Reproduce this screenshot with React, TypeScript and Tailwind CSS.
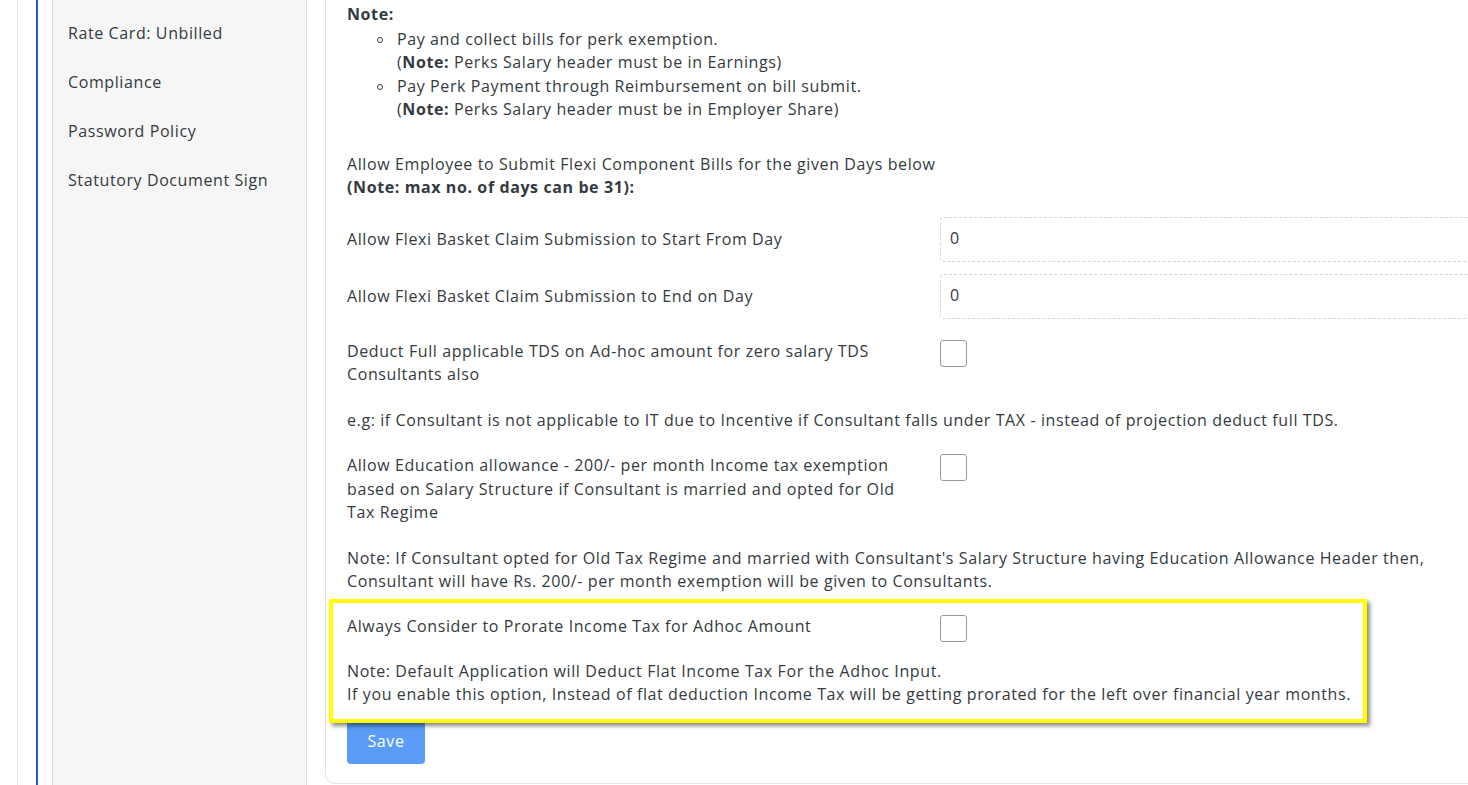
import React from 'react';

const sideItems = ['Rate Card: Unbilled', 'Compliance', 'Password Policy', 'Statutory Document Sign'];

const Check = () => (
  <div className="w-[27px] h-[27px] rounded-[3px] border border-[#9a9a9a] bg-white" />
);

const Row = ({ label, children, className = '' }: { label: React.ReactNode; children: React.ReactNode; className?: string }) => (
  <div className={`flex items-start ${className}`}>
    <div className="w-[593px] pr-[40px] shrink-0">{label}</div>
    <div className="flex-1">{children}</div>
  </div>
);

const App: React.FC = () => {
  return (
    <div
      className="w-[1468px] h-[785px] overflow-hidden bg-white flex text-[16px] leading-[23.5px] tracking-[0.6px] text-[#343a40]"
      style={{ fontFamily: '"Open Sans", "Liberation Sans", sans-serif' }}
    >
      {/* outer rails */}
      <div className="w-[17px] shrink-0" />
      <div className="w-[19px] shrink-0 border-l border-[#e6e6e6]" />
      <div className="w-[16px] shrink-0 border-l-2 border-[#1d5bd6]" />

      {/* sidebar */}
      <div className="w-[255px] shrink-0 bg-[#f6f6f6] border-x border-[#dcdcdc] pl-[15px] pt-[22px]">
        {sideItems.map((s) => (
          <div key={s} className="h-[49px]">{s}</div>
        ))}
      </div>

      <div className="w-[18px] shrink-0" />

      {/* content card */}
      <div className="relative w-[1300px] shrink-0 border-l border-b border-[#e3e3e3] rounded-bl-[10px] h-[784px] pl-[21px] pt-[3px]">
        <div className="font-bold">Note:</div>
        <ul className="pl-[50px] pt-[1px]">
          <li className="relative">
            <span className="absolute -left-[20px] top-[9px] w-[6px] h-[6px] rounded-full border border-[#343a40]" />
            Pay and collect bills for perk exemption.
            <br />(<b>Note:</b> Perks Salary header must be in Earnings)
          </li>
          <li className="relative">
            <span className="absolute -left-[20px] top-[9px] w-[6px] h-[6px] rounded-full border border-[#343a40]" />
            Pay Perk Payment through Reimbursement on bill submit.
            <br />(<b>Note:</b> Perks Salary header must be in Employer Share)
          </li>
        </ul>

        <div className="mt-[31px]">Allow Employee to Submit Flexi Component Bills for the given Days below</div>
        <div className="font-bold">(Note: max no. of days can be 31):</div>

        <Row className="mt-[17px]" label={<div className="pt-[11px]">Allow Flexi Basket Claim Submission to Start From Day</div>}>
          <div className="h-[45px] w-[640px] border border-dashed border-[#d6d6d6] rounded-[4px] flex items-center pl-[9px]">0</div>
        </Row>
        <Row className="mt-[12px]" label={<div className="pt-[11px]">Allow Flexi Basket Claim Submission to End on Day</div>}>
          <div className="h-[45px] w-[640px] border border-dashed border-[#d6d6d6] rounded-[4px] flex items-center pl-[9px]">0</div>
        </Row>

        <Row className="mt-[21px]" label="Deduct Full applicable TDS on Ad-hoc amount for zero salary TDS Consultants also">
          <Check />
        </Row>
        <div className="mt-[22px]">
          e.g: if Consultant is not applicable to IT due to Incentive if Consultant falls under TAX - instead of projection deduct full TDS.
        </div>

        <Row className="mt-[22px]" label="Allow Education allowance - 200/- per month Income tax exemption based on Salary Structure if Consultant is married and opted for Old Tax Regime">
          <Check />
        </Row>
        <div className="mt-[22px] w-[1100px]">
          Note: If Consultant opted for Old Tax Regime and married with Consultant's Salary Structure having Education Allowance Header then, Consultant will have Rs. 200/- per month exemption will be given to Consultants.
        </div>

        <Row className="mt-[21px]" label="Always Consider to Prorate Income Tax for Adhoc Amount">
          <Check />
        </Row>
        <div className="mt-[18px]">
          Note: Default Application will Deduct Flat Income Tax For the Adhoc Input.
          <br />If you enable this option, Instead of flat deduction Income Tax will be getting prorated for the left over financial year months.
        </div>

        <button className="mt-[12px] w-[78px] h-[45px] rounded-[4px] bg-[#5a9cf8] text-white pt-[1px] tracking-[0.6px]">Save</button>

        {/* yellow highlight annotation */}
        <div className="absolute left-[3px] top-[599px] w-[1038px] h-[124px] border-[4px] border-[#ffff00] shadow-[3px_3px_4px_rgba(0,0,0,0.45)] pointer-events-none" />
      </div>
    </div>
  );
};

export default App;
